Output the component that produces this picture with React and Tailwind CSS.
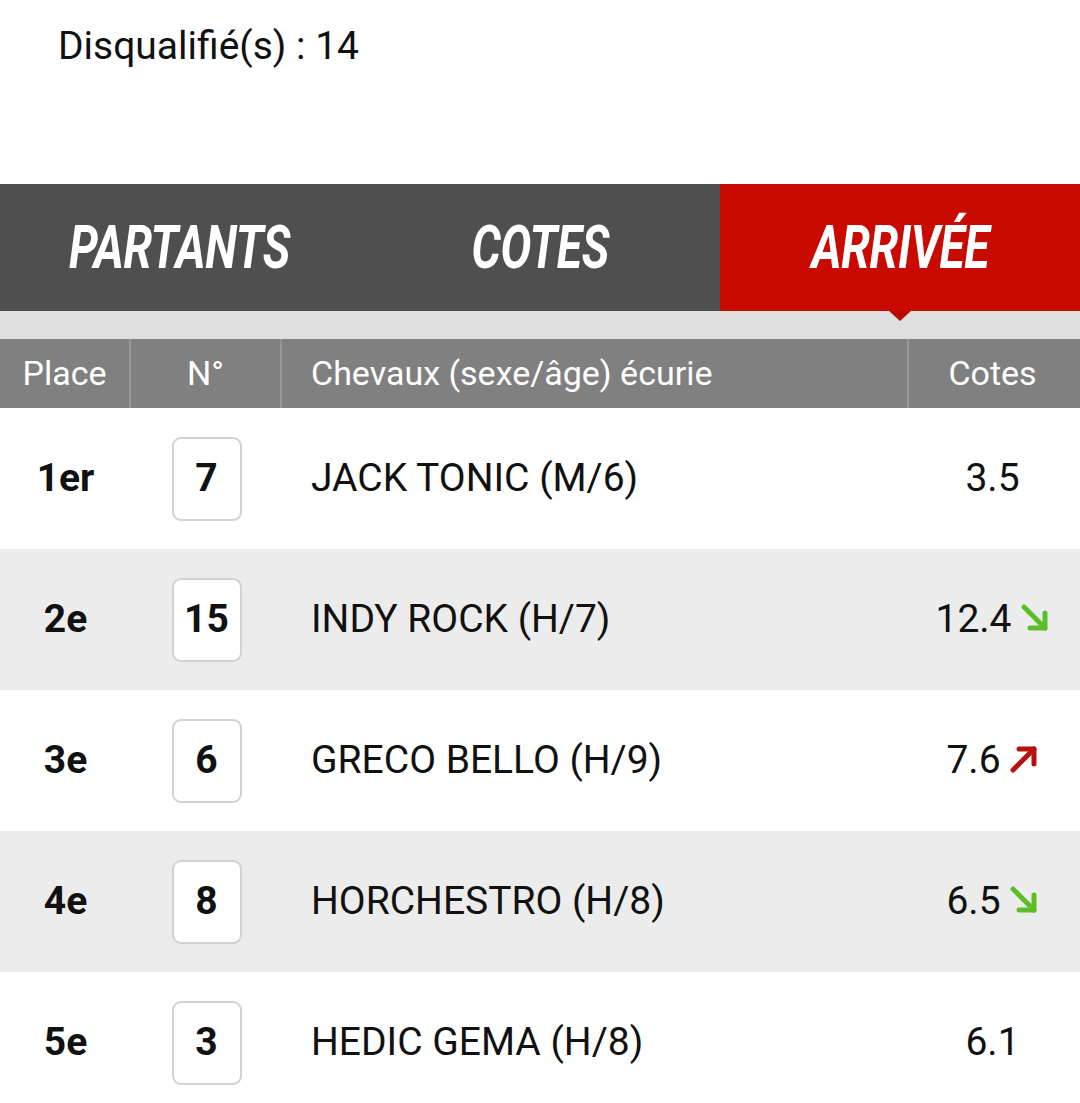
import React from 'react'

const rows = [
  { place: '1er', num: 7, name: 'JACK TONIC (M/6)', cote: '3.5', trend: null },
  { place: '2e', num: 15, name: 'INDY ROCK (H/7)', cote: '12.4', trend: 'down' },
  { place: '3e', num: 6, name: 'GRECO BELLO (H/9)', cote: '7.6', trend: 'up' },
  { place: '4e', num: 8, name: 'HORCHESTRO (H/8)', cote: '6.5', trend: 'down' },
  { place: '5e', num: 3, name: 'HEDIC GEMA (H/8)', cote: '6.1', trend: null },
]

const Trend = ({ dir }) => {
  if (dir === 'down') {
    return (
      <svg width="30" height="30" viewBox="0 0 30 30" className="ml-[8px] mb-[4px]">
        <g stroke="#5cbf2a" strokeWidth="5" strokeLinecap="round" strokeLinejoin="round" fill="none">
          <path d="M4 4 L25 25" />
          <path d="M25 10 L25 25 L10 25" />
        </g>
      </svg>
    )
  }
  return (
    <svg width="30" height="30" viewBox="0 0 30 30" className="ml-[8px] mb-[4px]">
      <g stroke="#b5120f" strokeWidth="5" strokeLinecap="round" strokeLinejoin="round" fill="none">
        <path d="M4 26 L25 5" />
        <path d="M10 5 L25 5 L25 20" />
      </g>
    </svg>
  )
}

const Tab = ({ label, active }) => (
  <div className={`relative flex-1 flex items-center justify-center ${active ? 'bg-[#c80a00]' : ''}`}>
    <span className="inline-block font-bold italic text-white text-[60px] leading-none scale-x-[0.77] tracking-[-0.5px]">
      {label}
    </span>
    {active && (
      <div className="absolute left-1/2 top-full -translate-x-1/2 w-0 h-0 border-l-[11px] border-r-[11px] border-t-[10px] border-l-transparent border-r-transparent border-t-[#b80a02]" />
    )}
  </div>
)

const App = () => {
  return (
    <div className="w-[1080px] bg-white font-['Roboto',sans-serif] text-[#111] overflow-hidden">
      <div className="h-[184px] pl-[58px] pt-[23px] text-[39px] leading-[46px] text-[#111]">
        Disqualifié(s) : 14
      </div>

      <div className="flex h-[127px] bg-[#4f4f4f]">
        <Tab label="PARTANTS" />
        <Tab label="COTES" />
        <Tab label="ARRIVÉE" active />
      </div>
      <div className="h-[28px] bg-[#e0e0e0]" />

      <div className="flex h-[69px] bg-[#808080] text-white text-[34px]">
        <div className="w-[131px] flex items-center justify-center border-r-2 border-[#979797]">Place</div>
        <div className="w-[151px] flex items-center justify-center border-r-2 border-[#979797]">N°</div>
        <div className="w-[627px] flex items-center pl-[29px] border-r-2 border-[#979797]">Chevaux (sexe/âge) écurie</div>
        <div className="flex-1 flex items-center justify-center pr-[4px]">Cotes</div>
      </div>

      {rows.map((r, i) => (
        <div key={i} className={`flex h-[141px] items-center text-[39px] ${i % 2 === 1 ? 'bg-[#ececec]' : 'bg-white'}`}>
          <div className="w-[131px] flex justify-center font-bold">{r.place}</div>
          <div className="w-[151px] flex justify-center">
            <div className="w-[70px] h-[84px] rounded-[9px] border-2 border-[#d2d2d2] bg-white flex items-center justify-center font-bold text-[39px]">
              {r.num}
            </div>
          </div>
          <div className="w-[627px] pl-[29px]">{r.name}</div>
          <div className="flex-1 flex items-center justify-center pr-[4px]">
            <span>{r.cote}</span>
            {r.trend && <Trend dir={r.trend} />}
          </div>
        </div>
      ))}
    </div>
  )
}

export default App
